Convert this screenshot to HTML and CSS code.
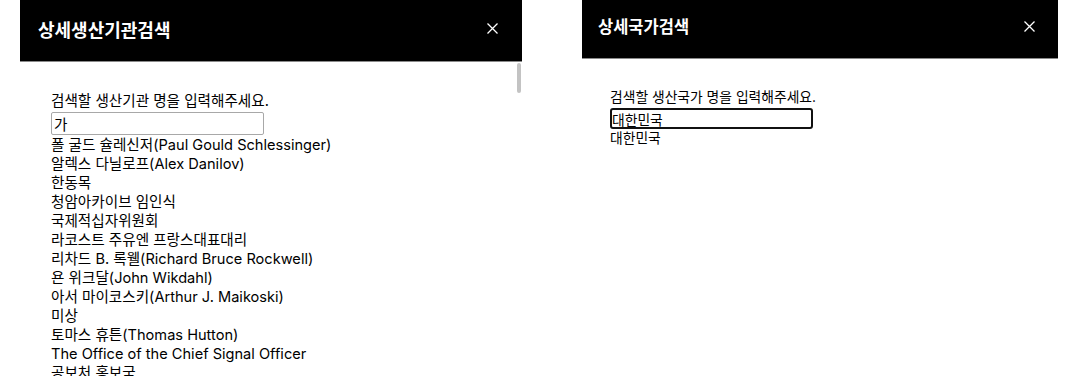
FILE: index.html
```html
<!DOCTYPE html>
<html>
	<head>
		<meta charset="utf-8" />
		<title>상세검색</title>
		<link rel="stylesheet" href="styles.css">
	</head>
	<body>
		<div class="modals">
			<div class="modal modal-org">
				<div class="modal-head">
					<h2>상세생산기관검색</h2>
					<a class="close" href="#">
						<svg width="11" height="11" viewBox="0 0 11 11"><path d="M0.5 0.5L10.5 10.5M10.5 0.5L0.5 10.5" stroke="#fff" stroke-width="1.3"/></svg>
					</a>
				</div>
				<div class="modal-body">
					<div class="thumb"></div>
					<label class="label">검색할 생산기관 명을 입력해주세요.</label>
					<input class="search" type="text" value="가">
					<ul class="results">
						<li>폴 굴드 슐레신저(Paul Gould Schlessinger)</li>
						<li>알렉스 다닐로프(Alex Danilov)</li>
						<li>한동목</li>
						<li>청암아카이브 임인식</li>
						<li>국제적십자위원회</li>
						<li>라코스트 주유엔 프랑스대표대리</li>
						<li>리차드 B. 록웰(Richard Bruce Rockwell)</li>
						<li>욘 위크달(John Wikdahl)</li>
						<li>아서 마이코스키(Arthur J. Maikoski)</li>
						<li>미상</li>
						<li>토마스 휴튼(Thomas Hutton)</li>
						<li>The Office of the Chief Signal Officer</li>
						<li>공보처 홍보국</li>
					</ul>
				</div>
			</div>
			<div class="modal modal-country">
				<div class="modal-head">
					<h2>상세국가검색</h2>
					<a class="close" href="#">
						<svg width="11" height="11" viewBox="0 0 11 11"><path d="M0.5 0.5L10.5 10.5M10.5 0.5L0.5 10.5" stroke="#fff" stroke-width="1.3"/></svg>
					</a>
				</div>
				<div class="modal-body">
					<label class="label">검색할 생산국가 명을 입력해주세요.</label>
					<input class="search focused" type="text" value="대한민국">
					<ul class="results">
						<li>대한민국</li>
					</ul>
				</div>
			</div>
		</div>
	</body>
</html>
```

FILE: styles.css
```css
html, body {
	margin: 0;
	padding: 0;
	background: #fff;
	height: 376px;
	overflow: hidden;
}

body {
	font-family: Inter, "Noto Sans CJK KR", sans-serif;
	font-size: 14.6px;
	color: #000;
}

.modals {
	display: flex;
	align-items: flex-start;
	padding-left: 20px;
	gap: 60px;
}

.modal {
	background: #fff;
}

.modal-org {
	width: 502px;
}

.modal-country {
	width: 476px;
	font-size: 13.8px;
}

.modal-head {
	background: #000;
	border-bottom: 1px solid #8a8a8a;
	display: flex;
	align-items: center;
	justify-content: space-between;
	box-sizing: border-box;
}

.modal-org .modal-head {
	height: 62px;
	padding: 0 24px 0 18px;
}

.modal-country .modal-head {
	height: 59px;
	padding: 0 23px 0 16px;
}

.modal-head h2 {
	margin: 0;
	color: #fff;
	font-family: "Noto Sans CJK KR", sans-serif;
	font-size: 18px;
	font-weight: 700;
	margin-top: -4px;
}

.modal-country .modal-head h2 {
	font-size: 16.5px;
	margin-top: -6px;
}

.close {
	display: flex;
	margin-top: -4px;
}

.modal-country .close {
	margin-top: -6px;
}

.modal-body {
	position: relative;
	display: flex;
	flex-direction: column;
	align-items: flex-start;
	line-height: 19px;
}

.modal-org .modal-body {
	padding: 30px 0 0 31px;
	height: 400px;
}

.modal-country .modal-body {
	padding: 29px 0 0 28px;
	line-height: 18px;
}

.thumb {
	position: absolute;
	top: 1px;
	right: 1px;
	width: 4px;
	height: 30px;
	border-radius: 2px;
	background: #c3c3c3;
}

.label {
	display: block;
}

.search {
	font-family: Inter, "Noto Sans CJK KR", sans-serif;
	font-size: inherit;
	color: #000;
	margin: 0;
	padding: 0 2px;
	box-sizing: border-box;
	outline: none;
}

.modal-org .search {
	width: 213px;
	height: 23px;
	border: 1px solid #a8a8a8;
	border-radius: 2px;
	margin-top: 1px;
}

.search.focused {
	width: 203px;
	height: 21px;
	border: 2px solid #111;
	border-radius: 3px;
	padding: 0;
	margin-top: 2px;
}

.results {
	list-style: none;
	margin: 1px 0 0;
	padding: 0;
}

.modal-country .results {
	margin-top: 0;
}

.results li {
	white-space: nowrap;
}
```
